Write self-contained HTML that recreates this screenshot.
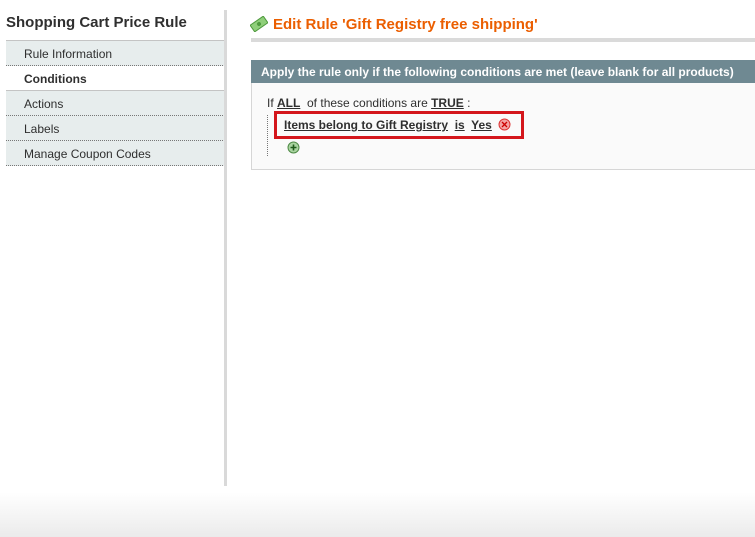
<!DOCTYPE html>
<html><head><meta charset="utf-8"><style>
*{margin:0;padding:0;box-sizing:border-box}
body{width:755px;height:537px;position:relative;overflow:hidden;background:#fff;font-family:"Liberation Sans",Arial,sans-serif;font-size:11px;color:#2f2f2f}
.abs{position:absolute}
.tab{position:absolute;left:6px;width:219px;height:25px;padding-left:18px;line-height:27px;font-size:12px;color:#2f2f2f;background:#e7eded;border-bottom:1px dotted #777}
u{text-decoration:underline}
</style></head><body>
<div class="abs" style="left:6px;top:14px;font-size:15px;font-weight:bold;color:#2f2f2f">Shopping Cart Price Rule</div>
<div class="abs" style="left:6px;top:40px;width:219px;border-top:1px solid #c4c4c4"></div>
<div class="tab" style="top:41px">Rule Information</div>
<div class="tab" style="top:66px;background:#fff;border-bottom:1px solid #c4c4c4;font-weight:bold">Conditions</div>
<div class="tab" style="top:91px">Actions</div>
<div class="tab" style="top:116px">Labels</div>
<div class="tab" style="top:141px">Manage Coupon Codes</div>
<div class="abs" style="left:224px;top:10px;width:3px;height:476px;background:#d9d9d9"></div>
<svg class="abs" style="left:250px;top:16px" width="18" height="16" viewBox="0 0 18 16"><g transform="rotate(-35 9 8)"><rect x="1" y="4" width="16" height="8" fill="#8fcf7a" stroke="#4f9a3e"/><circle cx="9" cy="8" r="2" fill="#4f9a3e"/></g></svg>
<div class="abs" style="left:273px;top:16px;font-size:15px;font-weight:bold;color:#eb5e00">Edit Rule 'Gift Registry free shipping'</div>
<div class="abs" style="left:251px;top:38px;width:504px;height:4px;background:#dadada"></div>
<div class="abs" style="left:251px;top:60px;width:504px;height:23px;background:#6f8992;color:#fff;font-weight:bold;font-size:12px;line-height:24px;padding-left:10px;white-space:nowrap">Apply the rule only if the following conditions are met (leave blank for all products)</div>
<div class="abs" style="left:251px;top:83px;width:510px;height:87px;background:#fafafa;border:1px solid #d6d6d6;border-top:none"></div>
<div class="abs" style="left:267px;top:96px;font-size:12px;color:#2f2f2f">If <b><u>ALL</u></b>&nbsp; of these conditions are <b><u>TRUE</u></b> :</div>
<div class="abs" style="left:267px;top:115px;height:41px;border-left:1px dotted #777"></div>
<div class="abs" style="left:274px;top:111px;width:250px;height:28px;border:3px solid #d4161c"></div>
<div class="abs" style="left:284px;top:118px;font-size:12px;font-weight:bold;color:#2f2f2f;white-space:nowrap"><u>Items belong to Gift Registry</u>&nbsp; <u>is</u>&nbsp; <u>Yes</u></div>
<svg class="abs" style="left:498px;top:118px" width="13" height="13" viewBox="0 0 13 13"><circle cx="6.5" cy="6.5" r="5.5" fill="#f3a3a3" stroke="#d33"/><path d="M4 4l5 5M9 4l-5 5" stroke="#c00" stroke-width="1.3"/></svg>
<svg class="abs" style="left:287px;top:141px" width="13" height="13" viewBox="0 0 13 13"><circle cx="6.5" cy="6.5" r="5.5" fill="#a9d4a0" stroke="#4f8a46"/><path d="M6.5 3.5v6M3.5 6.5h6" stroke="#1f5a1a" stroke-width="1.6"/></svg>
<div class="abs" style="left:0;top:492px;width:755px;height:45px;background:linear-gradient(#fff,#ebebeb)"></div>
</body></html>
